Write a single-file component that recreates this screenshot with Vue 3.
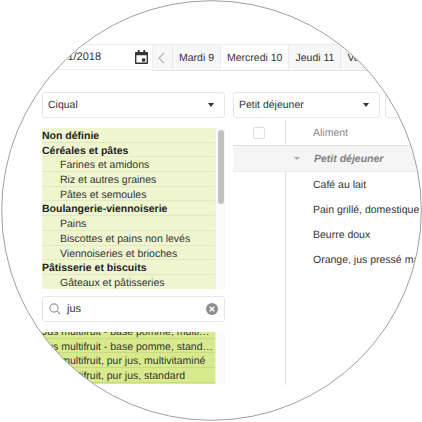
<template>
  <div class="frame">
    <div class="lens">
      <div class="page">
        <div class="topbar">
          <div class="date-input">
            <span>10/01/2018</span>
            <svg class="cal" width="13" height="14" viewBox="0 0 14 15">
              <path d="M3 0h2v2h4V0h2v2h2a1 1 0 0 1 1 1v11a1 1 0 0 1-1 1H1a1 1 0 0 1-1-1V3a1 1 0 0 1 1-1h2zM1.500 5.500v8h11v-8z" fill="#333" />
              <rect x="7.500" y="9" width="3.500" height="3.500" fill="#333" />
            </svg>
          </div>
          <div class="tabs">
            <div class="tab arrow">
              <svg width="7" height="12" viewBox="0 0 9 15">
                <path d="M7.500 1 1.500 7.500l6 6.500" fill="none" stroke="#aaa" stroke-width="1.400" />
              </svg>
            </div>
            <div v-for="day in days" :key="day" class="tab" :class="{ active: day === 'Mercredi 10' }">{{ day }}</div>
          </div>
        </div>

        <div class="columns">
          <div class="left">
            <div class="select">
              <span>Ciqual</span>
              <i class="caret"></i>
            </div>
            <div class="list">
              <div class="rows">
                <div v-for="c in categories" :key="c.name" class="row" :class="{ group: c.group }">{{ c.name }}</div>
              </div>
              <div class="track"><div class="thumb"></div></div>
            </div>
            <div class="search">
              <svg width="12" height="12" viewBox="0 0 14 14">
                <circle cx="5.800" cy="5.800" r="4.800" fill="none" stroke="#999" stroke-width="1.300" />
                <path d="M9.200 9.200 13 13" stroke="#999" stroke-width="1.500" />
              </svg>
              <span class="query">jus</span>
              <svg class="clear" width="12" height="12" viewBox="0 0 12 12">
                <circle cx="6" cy="6" r="6" fill="#8e8e8e" />
                <path d="M3.700 3.700l4.600 4.600M8.300 3.700l-4.600 4.600" stroke="#fff" stroke-width="1.500" />
              </svg>
            </div>
            <div class="list results">
              <div class="rows">
                <div v-for="r in results" :key="r" class="row">{{ r }}</div>
              </div>
              <div class="track"></div>
            </div>
          </div>

          <div class="right">
            <div class="selects">
              <div class="select meal">
                <span>Petit déjeuner</span>
                <i class="caret"></i>
              </div>
              <div class="select other"></div>
            </div>
            <div class="table">
              <div class="thead">
                <div class="check-col"><span class="checkbox"></span></div>
                <div class="name-col head">Aliment</div>
              </div>
              <div class="section">
                <div class="check-col"></div>
                <div class="name-col"><i class="caret small"></i>Petit déjeuner</div>
              </div>
              <div v-for="f in foods" :key="f" class="food">
                <div class="check-col"></div>
                <div class="name-col">{{ f }}</div>
              </div>
              <div class="filler">
                <div class="check-col"></div>
              </div>
            </div>
          </div>
        </div>
      </div>
    </div>
    <svg class="ring" width="422" height="422" viewBox="0 0 422 422">
      <circle cx="211.500" cy="210.500" r="209.800" fill="none" stroke="#a0a0a0" stroke-width="1" />
    </svg>
  </div>
</template>

<script setup>
const days = ["Mardi 9", "Mercredi 10", "Jeudi 11", "Vendredi 12"];

const categories = [
  { name: "Non définie", group: true },
  { name: "Céréales et pâtes", group: true },
  { name: "Farines et amidons" },
  { name: "Riz et autres graines" },
  { name: "Pâtes et semoules" },
  { name: "Boulangerie-viennoiserie", group: true },
  { name: "Pains" },
  { name: "Biscottes et pains non levés" },
  { name: "Viennoiseries et brioches" },
  { name: "Pâtisserie et biscuits", group: true },
  { name: "Gâteaux et pâtisseries" },
];

const results = [
  "Jus multifruit - base pomme, multivitaminé",
  "Jus multifruit - base pomme, standard",
  "Jus multifruit, pur jus, multivitaminé",
  "Jus multifruit, pur jus, standard",
];

const foods = [
  "Café au lait",
  "Pain grillé, domestique",
  "Beurre doux",
  "Orange, jus pressé maison",
];
</script>

<style>
html,
body {
  background: #fff;
}
</style>

<style scoped>
.frame {
  position: relative;
  width: 422px;
  height: 422px;
  overflow: hidden;
}

.ring {
  position: absolute;
  left: 0;
  top: 0;
}

.lens {
  width: 419px;
  height: 419px;
  margin: 1px 0 0 2px;
  border-radius: 50%;
  overflow: hidden;
  background: #fff;
  font-family: "Liberation Sans", Arial, sans-serif;
  font-size: 10.5px;
  color: #333;
  text-rendering: geometricPrecision;
}

.page {
  width: 560px;
  padding-top: 43px;
}

.topbar {
  display: flex;
  margin-left: 19px;
  height: 27px;
}

.date-input {
  width: 131px;
  height: 26px;
  box-sizing: border-box;
  display: flex;
  align-items: center;
  justify-content: space-between;
  padding: 0 4px 0 25px;
  border-top: 1px solid #eee;
  border-bottom: 1px solid #eee;
  font-size: 11px;
}

.tabs {
  display: flex;
  height: 27px;
  box-sizing: border-box;
  border: 1px solid #eee;
  border-width: 1px 0 1px 1px;
  border-bottom-color: #e4e4e4;
  background: #f7f7f7;
}

.tab {
  display: flex;
  align-items: center;
  padding: 0 6px;
  border-left: 1px solid #ebebeb;
  white-space: nowrap;
}

.tab.arrow {
  width: 19px;
  box-sizing: border-box;
  padding: 0 0 0 5px;
  border-left: 0;
}

.tab.active {
  background: #fff;
}

.columns {
  display: flex;
  margin-left: 40px;
  margin-top: 21px;
}

.left {
  width: 183px;
  flex: none;
}

.right {
  margin-left: 8px;
  flex: 1;
}

.select {
  height: 26px;
  box-sizing: border-box;
  display: flex;
  align-items: center;
  justify-content: space-between;
  padding: 0 10px 0 5px;
  border: 1px solid #e6e6e6;
  border-radius: 3px;
  background: #fff;
}

.caret {
  width: 0;
  height: 0;
  border-left: 3.5px solid transparent;
  border-right: 3.5px solid transparent;
  border-top: 4px solid #333;
}

.caret.small {
  margin-right: 14px;
  border-top-color: #aaa;
  border-left-width: 3px;
  border-right-width: 3px;
  border-top-width: 3px;
}

.list {
  display: flex;
  height: 161px;
  margin-top: 10px;
  overflow: hidden;
}

.rows {
  width: 173px;
  flex: none;
  background: #eff6cf;
}

.row {
  height: 14.700px;
  line-height: 16.500px;
  box-sizing: border-box;
  padding-left: 18px;
  border-bottom: 1px solid #e2e8c6;
  white-space: nowrap;
  overflow: hidden;
}

.row.group {
  padding-left: 0;
  font-weight: 700;
  color: #222;
}

.track {
  flex: 1;
  background: #fafafa;
  border-left: 1px solid #eee;
  padding: 2px;
}

.thumb {
  width: 6px;
  height: 74px;
  border-radius: 3px;
  background: #c2c2c2;
}

.search {
  height: 26px;
  margin-top: 7px;
  box-sizing: border-box;
  display: flex;
  align-items: center;
  padding: 0 6px 0 6px;
  border: 1px solid #e8e8e8;
  border-radius: 3px;
  font-size: 11px;
}

.query {
  flex: 1;
  margin-left: 6px;
}

.results {
  height: 52px;
  margin-top: 10px;
}

.results .rows {
  background: #d9ea8d;
  margin-top: -8px;
}

.results .row {
  padding: 0 2px 0 0;
  text-overflow: ellipsis;
  border-bottom-color: #c9d983;
}

.selects {
  display: flex;
  gap: 5px;
}

.meal {
  width: 147px;
}

.other {
  width: 100px;
}

.table {
  margin-top: 2px;
}

.thead,
.section,
.food,
.filler {
  display: flex;
}

.check-col {
  width: 53px;
  flex: none;
  box-sizing: border-box;
  display: flex;
  align-items: center;
  justify-content: center;
  border-right: 1px solid #e6e6e6;
}

.thead {
  height: 26px;
  box-sizing: border-box;
  border-bottom: 1px solid #e2e2e2;
}

.checkbox {
  width: 10px;
  height: 10px;
  border: 1px solid #ddd;
  border-radius: 2px;
}

.name-col {
  display: flex;
  align-items: center;
  padding-left: 27px;
}

.head {
  color: #888;
}

.section {
  height: 25px;
  background: #f5f5f5;
  border-bottom: 1px solid #ececec;
  font-style: italic;
  font-weight: 700;
  color: #808080;
}

.section .check-col {
  border-right-color: transparent;
}

.section .name-col {
  padding-left: 8px;
}

.food {
  height: 25px;
  white-space: nowrap;
}

.filler {
  height: 113px;
}
</style>
